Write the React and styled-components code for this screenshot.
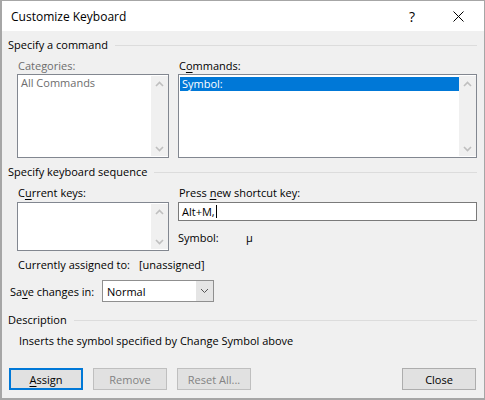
import React from 'react';
import styled, { createGlobalStyle } from 'styled-components';

const GlobalStyle = createGlobalStyle`
  html, body {
    margin: 0;
    padding: 0;
    background: #f0f0f0;
  }
  * {
    box-sizing: border-box;
  }
`;

const Dialog = styled.div`
  width: 485px;
  height: 400px;
  border: 1px solid #a6a6a6;
  border-width: 1px 1px 2px 2px;
  background: #f0f0f0;
  font-family: "Open Sans", "Noto Sans", sans-serif;
  font-size: 11px;
  color: #000;
  overflow: hidden;
`;

const TitleBar = styled.div`
  height: 30px;
  background: #fff;
  display: flex;
  align-items: center;
  padding: 0 3px 0 9px;
  font-size: 12px;
`;

const Title = styled.div`
  flex: 1;
`;

const TitleButton = styled.div`
  width: 46px;
  height: 30px;
  display: flex;
  align-items: center;
  justify-content: center;
  font-size: 14px;
`;

const Body = styled.div`
  padding: 0 7px 0 6px;
  display: flex;
  flex-direction: column;
`;

const GroupHeader = styled.div`
  display: flex;
  align-items: center;
  gap: 7px;
  height: 16px;
  line-height: 16px;
  margin-top: ${({ $top }) => $top}px;
  white-space: nowrap;

  &::after {
    content: '';
    flex: 1;
    height: 1px;
    background: #dcdcdc;
  }
`;

const Columns = styled.div`
  display: grid;
  grid-template-columns: 152px 299px;
  column-gap: 9px;
  margin: 5px 0 0 9px;
`;

const Column = styled.div`
  display: flex;
  flex-direction: column;
`;

const Label = styled.div`
  height: 16px;
  line-height: 16px;
  padding-left: 1px;
  margin-bottom: ${({ $bottom }) => $bottom || 0}px;
  color: ${({ $muted }) => ($muted ? '#6d6d6d' : '#000')};
`;

const Key = styled.span`
  text-decoration: underline;
  text-underline-offset: 2px;
`;

const ListBox = styled.div`
  height: ${({ $height }) => $height}px;
  border: 1px solid #828790;
  background: #fff;
  display: flex;
  padding: 1px 0 1px 1px;
`;

const ListItems = styled.div`
  flex: 1;
  display: flex;
  flex-direction: column;
`;

const ListItem = styled.div`
  height: 14px;
  line-height: 14px;
  padding-left: 2px;
  color: ${({ $disabled, $selected }) => ($selected ? '#fff' : $disabled ? '#6d6d6d' : '#000')};
  background: ${({ $selected }) => ($selected ? '#0078d7' : 'transparent')};
  margin-top: ${({ $selected }) => ($selected ? 1 : 0)}px;
`;

const ScrollBar = styled.div`
  width: 17px;
  background: #f0f0f0;
  display: flex;
  flex-direction: column;
  justify-content: space-between;
  align-items: center;
  padding: 5px 0 4px;
`;

const Chevron = ({ up, color = '#bfbfbf', width = 1.6 }) => (
  <svg width="9" height="6" viewBox="0 0 9 6">
    <path
      d={up ? 'M1 5 L4.5 1.5 L8 5' : 'M1 1 L4.5 4.5 L8 1'}
      fill="none"
      stroke={color}
      strokeWidth={width}
    />
  </svg>
);

const TextInput = styled.div`
  height: 19px;
  border: 1px solid #7a7a7a;
  background: #fff;
  display: flex;
  align-items: center;
  padding-left: 3px;
`;

const Caret = styled.span`
  display: inline-block;
  width: 1px;
  height: 13px;
  background: #000;
  margin-left: 1px;
`;

const InfoRow = styled.div`
  display: flex;
  height: 16px;
  line-height: 16px;
  margin-top: ${({ $top }) => $top}px;
  padding-left: ${({ $indent }) => $indent || 0}px;
`;

const InfoKey = styled.span`
  width: ${({ $width }) => $width}px;
`;

const SaveRow = styled.div`
  display: flex;
  align-items: center;
  height: 22px;
  margin-top: 7px;
`;

const SaveLabel = styled.div`
  width: 94px;
  padding-left: 2px;
`;

const Select = styled.div`
  width: 112px;
  height: 22px;
  border: 1px solid #8f8f8f;
  background: #fff;
  display: flex;
  align-items: stretch;
`;

const SelectValue = styled.div`
  flex: 1;
  padding-left: 4px;
  display: flex;
  align-items: center;
`;

const SelectButton = styled.div`
  width: 17px;
  background: #e5e5e5;
  display: flex;
  align-items: center;
  justify-content: center;
`;

const Description = styled.div`
  height: 16px;
  line-height: 16px;
  margin: 5px 0 0 11px;
`;

const ButtonRow = styled.div`
  display: flex;
  gap: 10px;
  margin-top: 19px;
  padding: 0 1px 0 1px;
`;

const Button = styled.div`
  width: 74px;
  height: 22px;
  display: flex;
  align-items: center;
  justify-content: center;
  background: #e1e1e1;
  border-style: solid;
  border-width: ${({ $default }) => ($default ? 2 : 1)}px;
  border-color: ${({ $disabled, $default }) => ($default ? '#0078d7' : $disabled ? '#bfbfbf' : '#adadad')};
  color: ${({ $disabled }) => ($disabled ? '#838383' : '#000')};
  margin-left: ${({ $push }) => ($push ? 'auto' : '0')};
`;

export default function App() {
  return (
    <>
      <GlobalStyle />
      <Dialog>
        <TitleBar>
          <Title>Customize Keyboard</Title>
          <TitleButton>?</TitleButton>
          <TitleButton>
            <svg width="11" height="11" viewBox="0 0 11 11">
              <path d="M0.5 0.5 L10.5 10.5 M10.5 0.5 L0.5 10.5" stroke="#000" strokeWidth="1" />
            </svg>
          </TitleButton>
        </TitleBar>
        <Body>
          <GroupHeader $top={6}>Specify a command</GroupHeader>
          <Columns>
            <Column>
              <Label $muted>Categories:</Label>
              <ListBox $height={84}>
                <ListItems>
                  <ListItem $disabled>All Commands</ListItem>
                </ListItems>
                <ScrollBar>
                  <Chevron up />
                  <Chevron />
                </ScrollBar>
              </ListBox>
            </Column>
            <Column>
              <Label>
                C<Key>o</Key>mmands:
              </Label>
              <ListBox $height={84}>
                <ListItems>
                  <ListItem $selected>Symbol:</ListItem>
                </ListItems>
                <ScrollBar>
                  <Chevron up />
                  <Chevron />
                </ScrollBar>
              </ListBox>
            </Column>
          </Columns>

          <GroupHeader $top={6}>Specify keyboard sequence</GroupHeader>
          <Columns>
            <Column>
              <Label $bottom={1}>
                C<Key>u</Key>rrent keys:
              </Label>
              <ListBox $height={49}>
                <ListItems />
                <ScrollBar>
                  <Chevron up />
                  <Chevron />
                </ScrollBar>
              </ListBox>
            </Column>
            <Column>
              <Label $bottom={1}>
                Press <Key>n</Key>ew shortcut key:
              </Label>
              <TextInput>
                Alt+M,<Caret />
              </TextInput>
              <InfoRow $top={9}>
                <InfoKey $width={68}>Symbol:</InfoKey>
                <span>µ</span>
              </InfoRow>
            </Column>
          </Columns>

          <InfoRow $top={6} $indent={10}>
            <InfoKey $width={121}>Currently assigned to:</InfoKey>
            <span>[unassigned]</span>
          </InfoRow>

          <SaveRow>
            <SaveLabel>
              Sa<Key>v</Key>e changes in:
            </SaveLabel>
            <Select>
              <SelectValue>Normal</SelectValue>
              <SelectButton>
                <Chevron color="#555" width={1} />
              </SelectButton>
            </Select>
          </SaveRow>

          <GroupHeader $top={10}>Description</GroupHeader>
          <Description>Inserts the symbol specified by Change Symbol above</Description>

          <ButtonRow>
            <Button $default>
              <Key>A</Key>ssign
            </Button>
            <Button $disabled>Remove</Button>
            <Button $disabled>Reset All...</Button>
            <Button $push>Close</Button>
          </ButtonRow>
        </Body>
      </Dialog>
    </>
  );
}
